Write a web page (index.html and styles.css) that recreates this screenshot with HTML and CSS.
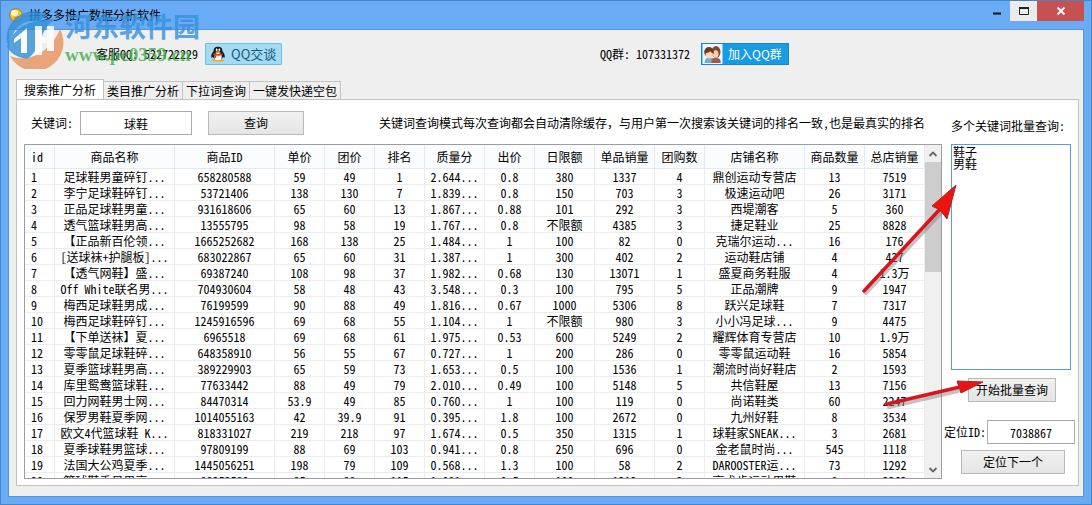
FILE: index.html
```html
<!DOCTYPE html>
<html lang="zh-CN">
<head>
<meta charset="utf-8">
<title>拼多多推广数据分析软件</title>
<link rel="stylesheet" href="styles.css">
</head>
<body>
<div class="window">
  <header class="titlebar">
    <svg class="app-icon" viewBox="0 0 14 14"><circle cx="7" cy="7" r="6.3" fill="#f5c431" stroke="#a87c14"/><ellipse cx="5.6" cy="5" rx="3.6" ry="3" fill="#fff6c4"/><path d="M4 10l5-2 2 1-3 3z" fill="#d58a13"/></svg>
    <h1 class="title">拼多多推广数据分析软件</h1>
    <div class="window-buttons">
      <button class="win-btn" aria-label="最小化"><svg viewBox="0 0 12 12"><path d="M2 8.500h8" stroke="#111" stroke-width="2"/></svg></button>
      <button class="win-btn win-max" aria-label="最大化"><svg viewBox="0 0 12 12"><path d="M1.500 2.500h9v7h-9z" fill="none" stroke="#222"/><path d="M1 3h10" stroke="#222" stroke-width="2"/></svg></button>
      <button class="win-btn win-close" aria-label="关闭"><svg viewBox="0 0 12 12"><path d="M2.500 2.500l7 7M9.500 2.500l-7 7" stroke="#fff" stroke-width="1.800"/></svg></button>
    </div>
  </header>
  <div class="client">
    <div class="contacts">
      <div class="contact contact-service"><span>客服QQ: 522722229</span>
        <button class="qq-talk"><svg class="penguin" viewBox="0 0 18 18"><ellipse cx="9" cy="16" rx="7" ry="1.700" fill="#f3a51c"/><path d="M4 6C4 2 6 .8 9 .8S14 2 14 6c2 2 3 5 2.500 7-.6.300-1.200-.2-1.700-1-1 4-10.600 4-11.600 0-.5.800-1.100 1.300-1.700 1C1 11 2 8 4 6z" fill="#17191d"/><ellipse cx="9" cy="12" rx="4.200" ry="4" fill="#fff"/><path d="M4 8c3 1.700 7 1.700 10 0l.5 1.800c-3.500 1.700-7.500 1.700-11 0z" fill="#de2f26"/><path d="M5 10l2 .5v3H5z" fill="#de2f26"/><ellipse cx="7.500" cy="4.200" rx="1" ry="1.500" fill="#fff"/><ellipse cx="10.500" cy="4.200" rx="1" ry="1.500" fill="#fff"/><ellipse cx="9" cy="6.800" rx="3" ry="1" fill="#f7b21d"/></svg>QQ交谈</button>
      </div>
      <div class="contact"><span>QQ群: 107331372</span>
        <button class="qq-group"><svg class="people" viewBox="0 0 20 20"><path fill="#eef7fc" d="M0 0h20v20H0z"/><path d="M2 19c0-4 2-5 4-5h8c3 0 4 2 4 5z" fill="#6eaed0"/><path d="M9 17c0-4 9-4 9 0v2H9z" fill="#a8574e"/><ellipse cx="13.500" cy="8" rx="4.500" ry="6" fill="#87482d"/><ellipse cx="13" cy="10" rx="3" ry="3.800" fill="#f7cfab"/><ellipse cx="6.500" cy="8" rx="4.800" ry="5" fill="#6e3a26"/><ellipse cx="6.800" cy="10.500" rx="3.600" ry="4" fill="#fbd7b5"/><path d="M3 9c3 0 4-1 5-2 0 1 1 2 3 2-1-5-7-5-8 0z" fill="#6e3a26"/></svg><span>加入QQ群</span></button>
      </div>
    </div>
    <nav class="tabs">
      <button class="tab tab-active">搜索推广分析</button><button class="tab">类目推广分析</button><button class="tab">下拉词查询</button><button class="tab">一键发快递空包</button>
    </nav>
    <main class="pane">
      <section class="results">
        <form class="search">
          <label for="kw">关键词:</label>
          <input class="field kw" id="kw" value="球鞋">
          <button class="btn btn-query" type="button">查询</button>
          <p class="notice">关键词查询模式每次查询都会自动清除缓存，与用户第一次搜索该关键词的排名一致,也是最真实的排名</p>
        </form>
        <div class="list">
          <div class="list-view">
            <table class="grid">
              <colgroup><col class="w30"><col class="w120"><col class="w100"><col class="w50"><col class="w50"><col class="w50"><col class="w60"><col class="w50"><col class="w60"><col class="w60"><col class="w50"><col class="w100"><col class="w60"><col class="w60"></colgroup>
              <thead><tr><th>id</th><th>商品名称</th><th>商品ID</th><th>单价</th><th>团价</th><th>排名</th><th>质量分</th><th>出价</th><th>日限额</th><th>单品销量</th><th>团购数</th><th>店铺名称</th><th>商品数量</th><th>总店销量</th></tr></thead>
              <tbody>
<tr><td>1</td><td>足球鞋男童碎钉...</td><td>658280588</td><td>59</td><td>49</td><td>1</td><td>2.644...</td><td>0.8</td><td>380</td><td>1337</td><td>4</td><td>鼎创运动专营店</td><td>13</td><td>7519</td></tr>
<tr><td>2</td><td>李宁足球鞋碎钉...</td><td>53721406</td><td>138</td><td>130</td><td>7</td><td>1.839...</td><td>0.8</td><td>150</td><td>703</td><td>3</td><td>极速运动吧</td><td>26</td><td>3171</td></tr>
<tr><td>3</td><td>正品足球鞋男童...</td><td>931618606</td><td>65</td><td>60</td><td>13</td><td>1.867...</td><td>0.88</td><td>101</td><td>292</td><td>3</td><td>西堤潮客</td><td>5</td><td>360</td></tr>
<tr><td>4</td><td>透气篮球鞋男高...</td><td>13555795</td><td>98</td><td>58</td><td>19</td><td>1.767...</td><td>0.8</td><td>不限额</td><td>4385</td><td>3</td><td>捷足鞋业</td><td>25</td><td>8828</td></tr>
<tr><td>5</td><td>【正品新百伦领...</td><td>1665252682</td><td>168</td><td>138</td><td>25</td><td>1.484...</td><td>1</td><td>100</td><td>82</td><td>0</td><td>克瑞尔运动...</td><td>16</td><td>176</td></tr>
<tr><td>6</td><td>[送球袜+护腿板]...</td><td>683022867</td><td>65</td><td>60</td><td>31</td><td>1.387...</td><td>1</td><td>300</td><td>402</td><td>2</td><td>运动鞋店铺</td><td>4</td><td>427</td></tr>
<tr><td>7</td><td>【透气网鞋】盛...</td><td>69387240</td><td>108</td><td>98</td><td>37</td><td>1.982...</td><td>0.68</td><td>130</td><td>13071</td><td>1</td><td>盛夏商务鞋服</td><td>4</td><td>1.3万</td></tr>
<tr><td>8</td><td>Off White联名男...</td><td>704930604</td><td>58</td><td>48</td><td>43</td><td>3.548...</td><td>0.3</td><td>100</td><td>795</td><td>5</td><td>正品潮牌</td><td>9</td><td>1947</td></tr>
<tr><td>9</td><td>梅西足球鞋男成...</td><td>76199599</td><td>90</td><td>88</td><td>49</td><td>1.816...</td><td>0.67</td><td>1000</td><td>5306</td><td>8</td><td>跃兴足球鞋</td><td>7</td><td>7317</td></tr>
<tr><td>10</td><td>梅西足球鞋碎钉...</td><td>1245916596</td><td>69</td><td>68</td><td>55</td><td>1.104...</td><td>1</td><td>不限额</td><td>980</td><td>3</td><td>小小冯足球...</td><td>9</td><td>4475</td></tr>
<tr><td>11</td><td>【下单送袜】夏...</td><td>6965518</td><td>69</td><td>68</td><td>61</td><td>1.975...</td><td>0.53</td><td>600</td><td>5249</td><td>2</td><td>耀辉体育专营店</td><td>10</td><td>1.9万</td></tr>
<tr><td>12</td><td>零零鼠足球鞋碎...</td><td>648358910</td><td>56</td><td>55</td><td>67</td><td>0.727...</td><td>1</td><td>200</td><td>286</td><td>0</td><td>零零鼠运动鞋</td><td>16</td><td>5854</td></tr>
<tr><td>13</td><td>夏季篮球鞋男高...</td><td>389229903</td><td>65</td><td>59</td><td>73</td><td>1.653...</td><td>0.5</td><td>100</td><td>1536</td><td>1</td><td>潮流时尚好鞋店</td><td>2</td><td>1593</td></tr>
<tr><td>14</td><td>库里鸳鸯篮球鞋...</td><td>77633442</td><td>88</td><td>49</td><td>79</td><td>2.010...</td><td>0.49</td><td>100</td><td>5148</td><td>5</td><td>共信鞋屋</td><td>13</td><td>7156</td></tr>
<tr><td>15</td><td>回力网鞋男士网...</td><td>84470314</td><td>53.9</td><td>49</td><td>85</td><td>0.760...</td><td>1</td><td>100</td><td>119</td><td>0</td><td>尚诺鞋类</td><td>60</td><td>2247</td></tr>
<tr><td>16</td><td>保罗男鞋夏季网...</td><td>1014055163</td><td>42</td><td>39.9</td><td>91</td><td>0.395...</td><td>1.8</td><td>100</td><td>2672</td><td>0</td><td>九州好鞋</td><td>8</td><td>3534</td></tr>
<tr><td>17</td><td>欧文4代篮球鞋 K...</td><td>818331027</td><td>219</td><td>218</td><td>97</td><td>1.674...</td><td>0.5</td><td>350</td><td>1315</td><td>1</td><td>球鞋家SNEAK...</td><td>3</td><td>2681</td></tr>
<tr><td>18</td><td>夏季球鞋男篮球...</td><td>97809199</td><td>88</td><td>69</td><td>103</td><td>0.941...</td><td>0.8</td><td>250</td><td>696</td><td>0</td><td>金老鼠时尚...</td><td>545</td><td>1118</td></tr>
<tr><td>19</td><td>法国大公鸡夏季...</td><td>1445056251</td><td>198</td><td>79</td><td>109</td><td>0.568...</td><td>1.3</td><td>100</td><td>58</td><td>2</td><td>DAROOSTER运...</td><td>73</td><td>1292</td></tr>
<tr><td>20</td><td>篮球鞋季贝男高...</td><td>80353580</td><td>85</td><td>88</td><td>115</td><td>1.081...</td><td>0.5</td><td>100</td><td>1212</td><td>2</td><td>高术步运动男鞋</td><td>8</td><td>2262</td></tr>
              </tbody>
            </table>
          </div>
          <div class="scrollbar">
            <button class="scroll-btn" type="button" aria-label="向上滚动"><svg viewBox="0 0 10 10"><path d="M1.500 7L5 3.500 8.500 7" fill="none" stroke="#666" stroke-width="1.800"/></svg></button>
            <div class="thumb"></div>
            <button class="scroll-btn scroll-down" type="button" aria-label="向下滚动"><svg viewBox="0 0 10 10"><path d="M1.500 3L5 6.500 8.500 3" fill="none" stroke="#666" stroke-width="1.800"/></svg></button>
          </div>
        </div>
      </section>
      <aside class="batch">
        <label class="batch-label" for="batch">多个关键词批量查询:</label>
        <textarea class="batch-text" id="batch">鞋子
男鞋</textarea>
        <button class="btn btn-batch">开始批量查询</button>
        <div class="locate"><label for="locate">定位ID:</label><input class="field" id="locate" value="7038867"></div>
        <button class="btn btn-next">定位下一个</button>
      </aside>
      <svg class="arrow arrow-up" viewBox="0 0 100 120"><path d="M9 113L86 31" stroke="#888" stroke-opacity=".5" stroke-width="4" stroke-linecap="round"/><path d="M7 111L84 28" stroke="#d8151b" stroke-width="3.500" stroke-linecap="round"/><path d="M99 5L90 39L83 30L75 26Z" fill="#ee1310" stroke="#9c2b2b"/></svg>
      <svg class="arrow arrow-right" viewBox="0 0 106 36"><path d="M7 32L76 16" stroke="#888" stroke-opacity=".5" stroke-width="4" stroke-linecap="round"/><path d="M5 29L78 12" stroke="#d8151b" stroke-width="3.500" stroke-linecap="round"/><path d="M101 7L79 18L77 12L75 6Z" fill="#ee1310" stroke="#9c2b2b"/></svg>
    </main>
  </div>
</div>
<div class="watermark">
  <svg class="wm-logo" viewBox="0 0 60 60"><path d="M3 34A27 27 0 0 1 43 6L34 13A20 20 0 0 0 9 38Z" fill="#3190d8"/><path d="M56 20A27 27 0 0 1 6 47C28 55 48 40 56 20Z" fill="#e9925c"/><path d="M3 37C9 19 25 10 52 10C35 18 39 40 23 50C11 48 5 43 3 37Z" fill="#3190d8"/><path d="M10 30l13-11v25h-6V29l-7 5zM31 17h7v11h5V17h7v25h-7v-8h-5v12h-7z" fill="#fff"/></svg>
  <div><div class="wm-name">河东软件园</div><div class="wm-url">www.pc0359.cn</div></div>
</div>
</body>
</html>
```
FILE: styles.css
```css
* { box-sizing: border-box; }
body {
  margin: 0;
  position: relative;
  color: #000;
  font: 12px/16px "Noto Sans Mono CJK SC", "Liberation Mono", "Noto Sans CJK SC", monospace;
}
button, input, textarea { font: inherit; color: inherit; margin: 0; padding: 0; }
svg { display: block; }
p, h1 { margin: 0; }
.window {
  display: flex;
  flex-direction: column;
  height: 100vh;
  padding: 0 7px 7px;
  border: 1px solid #4885c7;
  background: #6aabf5;
}
.titlebar { display: flex; align-items: center; height: 28px; flex: none; }
.app-icon { width: 14px; height: 14px; margin: 0 6px 0 1px; }
.title { font: 12px/16px "Noto Sans CJK SC", sans-serif; flex: 1; }
.window-buttons { display: flex; align-self: flex-start; }
.win-btn { display: flex; align-items: center; justify-content: center; width: 27px; height: 20px; border: 0; background: none; }
.win-btn svg { width: 12px; height: 12px; }
.win-max { background: #ececec; }
.win-close { width: 47px; background: #c75050; }
.client {
  flex: 1;
  min-height: 0;
  display: flex;
  flex-direction: column;
  padding: 0 4px 10px 7px;
  border: 1px solid #5a93d2;
  background: #efefef;
}
.contacts { display: flex; flex: none; height: 49px; padding: 13px 0 0 80px; }
.contact { display: flex; gap: 7px; height: 22px; line-height: 22px; }
.contact-service { width: 504px; }
.contact + .contact { gap: 11px; }
.qq-talk { display: flex; align-items: center; gap: 5px; width: 77px; padding-left: 4px; border: 1px solid #6bc0e4; border-radius: 1px; background: #a2dbf3; color: #16587d; font: 13px/18px "Noto Sans CJK SC", sans-serif; white-space: nowrap; }
.penguin { width: 16px; height: 16px; flex: none; }
.qq-group { display: flex; align-items: center; width: 88px; gap: 5px; border: 1px solid #1588cc; background: #179be3; color: #fff; font: 12px/18px "Noto Sans CJK SC", sans-serif; white-space: nowrap; }
.people { width: 21px; height: 20px; flex: none; }
.tabs { display: flex; align-items: flex-end; flex: none; height: 20px; }
.tab { height: 18px; padding: 0 3px; border: 1px solid #c2c2c2; border-width: 1px 1px 0 0; background: #efefef; white-space: nowrap; }
.tab-active { position: relative; height: 21px; margin-bottom: -1px; padding: 0 7px; border-left-width: 1px; background: #fff; }
.pane {
  position: relative;
  flex: 1;
  min-height: 0;
  display: flex;
  gap: 2px;
  padding: 11px 3px 6px 7px;
  border: 1px solid #c2c2c2;
  background: #fff;
}
.results { flex: 1; min-width: 0; display: flex; flex-direction: column; }
.search { display: flex; align-items: center; height: 24px; margin-bottom: 9px; padding-left: 7px; flex: none; }
.search label { width: 49px; }
.field { height: 24px; min-width: 0; border: 1px solid #ababab; background: #fff; text-align: center; }
.kw { width: 112px; margin-right: 16px; }
.btn { height: 24px; border: 1px solid #b9b9b9; background: linear-gradient(#f1f1f1, #e5e5e5); }
.btn-query { width: 96px; }
.notice { flex: 1; text-align: right; padding-right: 17px; white-space: nowrap; }
.list { flex: 1; min-height: 0; display: flex; border: 1px solid #9a9da2; }
.list-view { flex: 1; min-width: 0; overflow: hidden; padding-right: 2px; }
.grid { width: 100%; table-layout: fixed; border-collapse: separate; border-spacing: 0; text-align: center; }
.grid th { height: 24px; padding: 0; font-weight: normal; background: #fafcfd; border: 1px solid #e3ebf0; border-width: 0 1px 1px 0; white-space: nowrap; }
.grid td { height: 16px; padding: 0; line-height: 15px; border: 1px solid #ececec; border-width: 0 1px 1px 0; white-space: nowrap; overflow: hidden; }
.grid td:first-child, .grid th:first-child { text-align: left; padding-left: 6px; }
.w30 { width: 30px; } .w50 { width: 50px; } .w60 { width: 60px; } .w100 { width: 100px; } .w120 { width: 120px; }
.scrollbar { width: 16px; flex: none; display: flex; flex-direction: column; background: #f0f0f0; }
.scroll-btn { display: flex; align-items: center; justify-content: center; height: 17px; border: 0; background: none; }
.scroll-btn svg { width: 10px; height: 10px; }
.thumb { height: 110px; background: #cdcdcd; }
.scroll-down { margin-top: auto; }
.batch { width: 131px; flex: none; display: flex; flex-direction: column; padding: 7px 0 5px; }
.batch-label { margin: 0 0 10px 7px; white-space: nowrap; }
.batch-text { flex: 1; min-height: 0; margin: 0 4px 8px 7px; padding: 1px; line-height: 12px; border: 1px solid #569de5; resize: none; overflow: hidden; outline: 0; }
.btn-batch { width: 88px; margin: 0 0 18px 24px; }
.locate { display: flex; align-items: center; margin-bottom: 6px; }
.locate label { width: 43px; white-space: nowrap; }
.locate .field { flex: 1; }
.btn-next { width: 104px; margin-left: 17px; }
.arrow { position: absolute; pointer-events: none; }
.arrow-up { left: 840px; top: 80px; width: 100px; height: 120px; }
.arrow-right { left: 865px; top: 275px; width: 106px; height: 36px; }
.watermark { position: absolute; left: 4px; top: 9px; display: flex; gap: 1px; opacity: .8; pointer-events: none; }
.wm-logo { width: 60px; height: 60px; }
.wm-name { color: #3591dc; font: bold 27px/34px "Noto Sans CJK SC", sans-serif; }
.wm-url { color: #3fae49; font: bold 19px/24px "Liberation Serif", serif; }
```
